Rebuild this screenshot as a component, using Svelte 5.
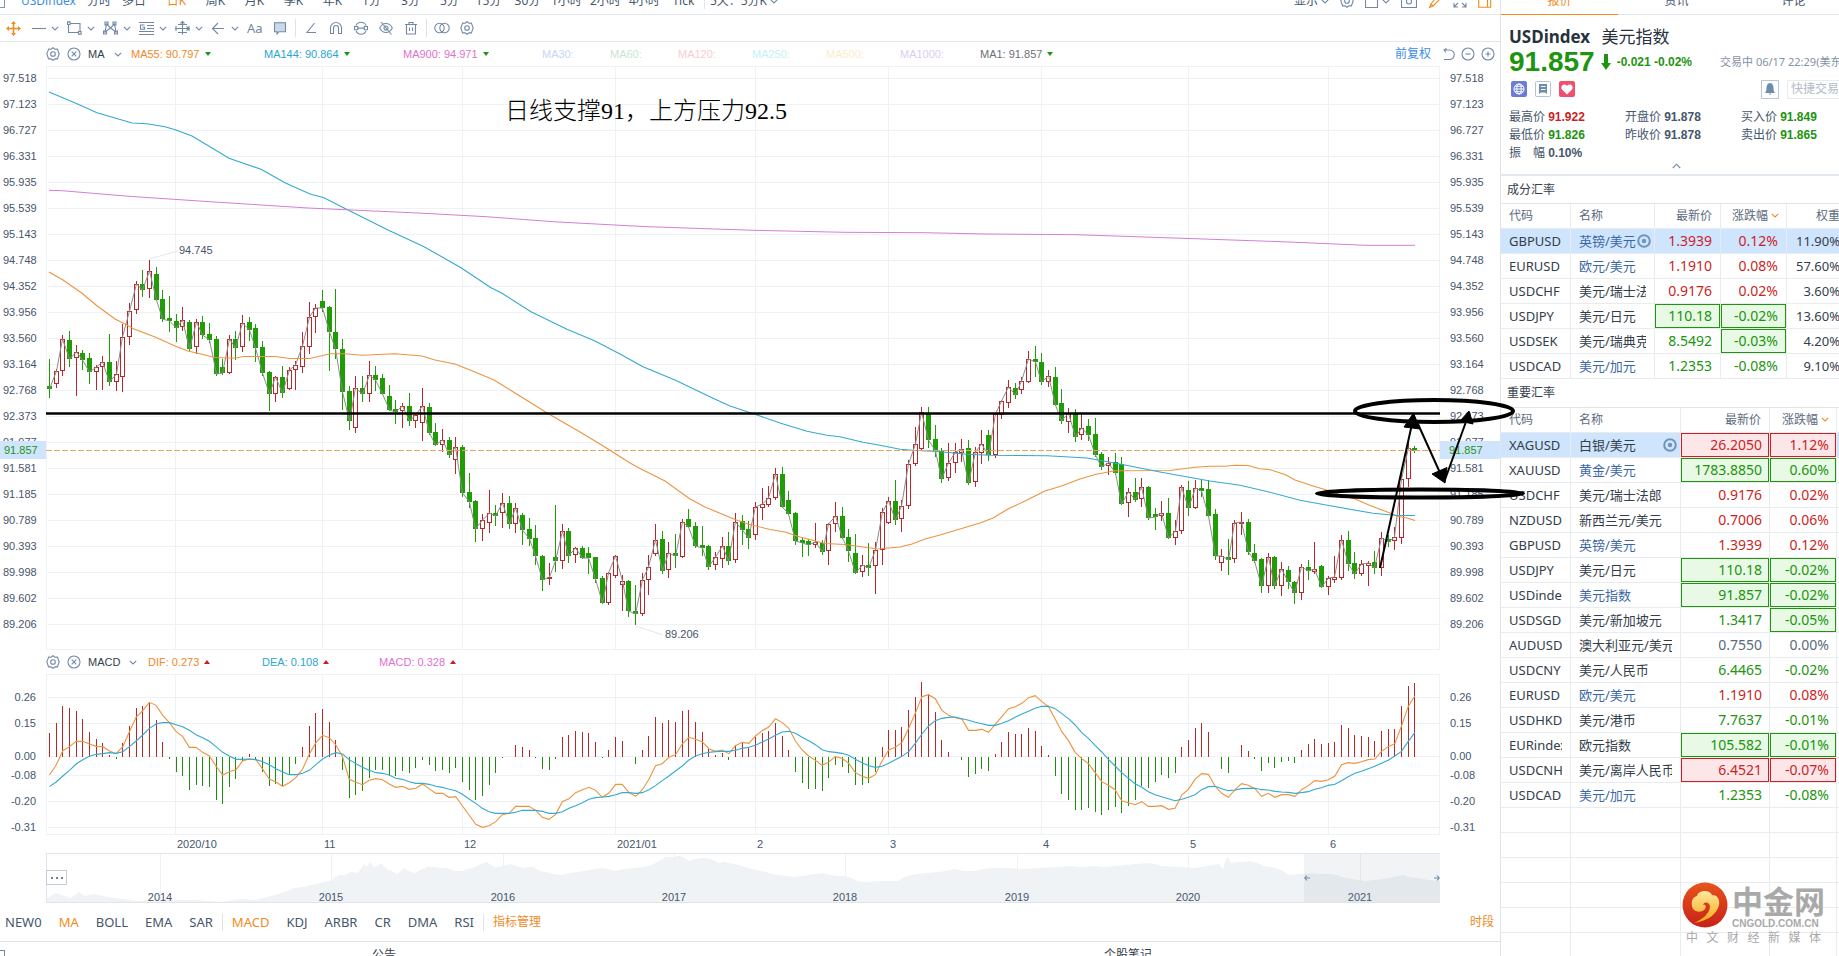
<script lang="ts">
  // direction, high, body top, body bottom, low (see priceY for the scale)
  const candleData = `
d 357 438 446 473|u 388 394 431 443|u 285 298 394 407|d 273 300 356 380|u 315 337 353 467|d 331 339 360 389|d 339 353 396 432|u 375 382 395 449
u 349 366 382 449|d 282 366 425 437|u 364 403 425 452|u 252 292 412 455|u 189 213 292 314|u 123 133 211 223|d 90 132 150 170|u 60 94 146 174
d 81 102 180 182|d 150 177 236 246|d 168 233 242 276|d 222 243 263 305|u 201 241 260 273|d 241 246 328 332|u 238 247 322 341|d 228 246 284 296
d 249 282 299 308|d 288 297 401 407|d 357 381 399 404|u 286 298 398 401|d 273 297 323 359|u 225 250 322 335|d 231 246 269 302|d 252 264 323 365
d 303 321 398 407|d 394 396 461 513|u 408 412 461 486|d 378 411 458 473|u 381 391 446 449|u 363 376 391 449|u 276 319 380 398|u 186 232 322 341
u 192 205 230 278|d 150 183 203 215|d 198 202 276 392|d 147 276 326 356|d 297 327 455 510|d 438 453 542 570|u 408 445 563 578|d 408 444 461 486
u 363 406 461 486|d 378 405 419 452|d 402 414 461 464|d 435 468 509 512|d 480 507 516 551|u 490 499 512 563|d 459 498 542 557|u 520 524 542 563
u 444 499 548 602|d 489 501 578 584|d 549 576 614 617|u 567 601 614 635|d 591 600 644 653|u 591 622 661 701|d 615 621 758 770|d 699 756 785 803
d 780 783 866 905|u 823 841 866 902|u 750 820 848 878|d 796 820 827 857|u 759 790 820 863|d 768 789 851 866|u 790 805 853 878|d 820 825 869 914
d 834 867 896 917|d 855 894 947 974|d 945 948 1019 1052|u 969 1012 1018 1034|d 795 951 962 995|u 852 874 962 987|d 864 873 947 968|u 922 925 946 968
d 919 924 953 956|d 921 939 953 1001|d 951 951 1016 1028|d 1008 1014 1088 1092|u 996 1000 1088 1094|u 945 947 1009 1013|u 1006 1024 1036 1112|d 1020 1023 1112 1130
d 1035 1113 1121 1154|u 999 1021 1123 1127|u 945 982 1021 1064|u 852 901 943 947|d 873 897 992 1001|u 906 940 991 1013|d 882 939 947 983|u 837 847 950 953
d 807 837 860 865|d 846 858 917 923|d 858 915 923 947|d 915 918 980 989|u 936 952 976 989|u 891 919 956 983|d 876 918 962 974|u 820 847 961 968
d 825 843 869 916|d 843 867 893 926|u 786 802 886 899|u 744 793 805 839|u 738 775 794 802|u 684 703 775 781|d 681 702 800 803|d 753 780 821 824
d 816 819 902 914|d 891 900 908 950|d 897 903 914 947|u 849 907 914 923|d 900 909 935 944|u 850 853 934 974|u 786 829 853 875|d 801 828 893 896
d 867 891 932 965|d 882 939 998 1001|u 945 976 997 1010|d 910 975 983 1007|u 906 931 979 1061|u 805 817 931 974|u 772 784 850 853|d 720 783 839 854
u 780 799 838 875|u 660 673 799 806|u 561 613 673 677|u 501 517 626 629|d 501 518 599 623|d 555 597 632 650|d 624 632 716 728|u 609 670 715 722
u 608 637 668 698|u 597 628 638 665|d 600 624 728 734|u 622 637 725 740|u 570 613 638 671|d 570 585 644 662|u 518 522 644 653|u 481 484 524 536
u 420 442 488 503|d 430 444 464 476|u 410 424 449 461|u 333 358 425 430|d 318 357 365 410|d 339 366 425 434|u 390 409 425 440|d 381 411 494 497
d 447 489 542 551|u 504 520 545 578|d 507 520 590 605|u 523 565 586 599|d 537 558 584 602|d 534 582 644 650|d 636 642 680 689|u 651 670 677 704
d 639 666 698 704|d 651 672 791 794|u 745 757 790 830|d 714 756 779 785|u 714 742 778 800|d 738 741 833 839|d 804 822 830 869|u 783 820 827 842
d 774 819 893 896|u 840 874 893 914|u 736 742 874 881|d 723 750 803 827|u 720 745 803 806|d 717 744 752 770|d 720 747 827 830|d 807 822 947 959
u 927 949 968 992|d 897 951 959 1004|u 840 850 956 968|u 816 847 853 884|d 838 846 935 944|d 912 939 962 968|d 955 957 1037 1058|u 939 952 1037 1058
d 948 951 1037 1046|u 966 988 1037 1067|d 978 990 1025 1046|d 1023 1025 1058 1091|u 973 982 1058 1079|d 960 981 994 1019|u 906 988 995 1001|d 975 978 1040 1043
u 1008 1015 1040 1064|u 949 1012 1019 1028|u 885 901 1013 1019|d 873 900 971 992|d 936 969 1001 1016|u 960 973 1001 1007|u 964 970 977 1037|d 933 966 983 1001
u 877 895 985 1007|d 885 897 905 920|u 861 892 902 929|u 700 718 893 911|u 610 625 718 740|d 618 624 632 638`;

  const slotX = (i: number) => 49 + i * 6.66;
  const priceY = (v: number) => Math.round(240 + v / 3);
  const macdY = (v: number) => 640 + v / 3;

  const candles = candleData.trim().split(/[|\n]/).map((row, i) => {
    const [dir, ...v] = row.split(' ');
    const [high, top, bottom, low] = v.map((n) => priceY(Number(n)));
    return { up: dir === 'u', x: Math.round(slotX(i)), high, top, bottom, low };
  });

  const closeLine = candles.map((c) => `${c.x + 0.5},${c.up ? c.top : c.bottom}`).join(' ');

  const ma55 = '49,272 63,280 82,293.3 96,305 115,319 125,324 134,329 155,337 165,341.5 175,346 188,351 205,355 215,357.5 225,358 236,358 243,356.5 275,356.5 290,358.5 310,358.5 330,353.7 345,353.7 362,355.3 395,353.7 422,356 435,360 455,364 475,372 494,380 515,393 548,413.5 580,432 600,444 630,463 640,468.5 665,481 690,499 705,507 735,519.5 748,524 770,529.5 785,532 800,537 825,543.5 845,544.5 878,549 900,547 912,544 925,539 940,535 960,529 980,523 993,518 1008,509 1025,501 1045,491 1060,486.5 1080,479 1095,474.5 1115,470.7 1170,470.5 1195,467.3 1210,466.3 1225,466.3 1235,465.3 1248,465.5 1260,468.7 1270,469.7 1285,474.5 1295,480 1310,485 1328,490.5 1340,494.5 1355,499 1370,505.5 1390,513 1398,516.5 1407,518 1415,520.5';
  const ma144 = '49,92 73,102 97,112.7 115,118 132,123 147,123.7 165,126.7 176,130 192,136 210,146.7 229,158.3 261,169.3 285,182.7 310,194 324,197.7 346,209 388,230 424,246.7 461,267.7 491,287.7 502,293.3 531,311.7 567,329.3 595,341 620,354 643,366.7 675,380 713,398.3 730,406 757,415 780,423 807,431.3 827,435.3 840,436.7 863,442.3 880,445.3 900,449.3 913,450.3 937,451.5 967,454.3 990,455.3 1047,455.7 1087,458 1120,464 1160,472 1210,481 1240,485.3 1268,491.7 1300,500.3 1333,506.3 1373,513.3 1397,515.5 1415,515.5';
  const ma900 = '49,190.3 62,190.7 129,196.3 219,202.3 308,208 424,213.3 486,216.7 558,222 647,226.7 754,230.3 844,232.3 924,232.7 986,234 1076,234.7 1183,238.3 1281,241.7 1366,245.3 1415,245.3';

  // histogram bar ends, 349 is the zero line
  const MACD_ZERO = 349;
  const bars = [
    280, 249, 198, 204, 213, 237, 276, 298, 309, 346, 356, 310, 258, 205, 199, 189, 241, 307, 356, 396, 408, 449, 434, 438, 440,
    480, 491, 440, 416, 362, 343, 357, 396, 438, 432, 438, 402, 372, 321, 259, 220, 208, 246, 300, 389, 473, 464, 453, 413, 389,
    389, 407, 407, 393, 399, 384, 360, 375, 392, 390, 399, 384, 425, 449, 480, 467, 434, 398, 353, 349, 315, 321, 331, 353, 387,
    389, 356, 291, 286, 273, 276, 279, 307, 353, 331, 291, 304, 349, 372, 331, 289, 232, 249, 240, 247, 213, 210, 247, 277, 327,
    345, 340, 360, 316, 310, 321, 291, 279, 273, 250, 289, 330, 395, 429, 446, 446, 452, 413, 375, 381, 398, 434, 434, 428, 395,
    322, 270, 270, 262, 211, 171, 127, 163, 217, 300, 337, 349, 360, 410, 401, 387, 392, 343, 307, 277, 282, 282, 265, 274, 319,
    346, 407, 461, 480, 510, 510, 503, 515, 524, 510, 500, 518, 498, 479, 438, 443, 425, 405, 413, 399, 322, 301, 265, 250, 277,
    349, 387, 398, 349, 315, 334, 357, 392, 369, 384, 366, 363, 369, 331, 312, 297, 312, 310, 307, 256, 265, 286, 288, 291, 304,
    273, 267, 267, 199, 138, 130
  ];
  const dif = [
    405, 375, 332, 320, 304, 304, 312, 319, 320, 333, 341, 320, 275, 232, 212, 187, 196, 226, 248, 274, 290, 322, 322, 337, 348,
    378, 405, 395, 389, 363, 357, 359, 387, 417, 426, 439, 428, 413, 388, 343, 308, 286, 293, 315, 350, 418, 427, 434, 421, 416,
    419, 432, 442, 439, 448, 445, 432, 446, 460, 460, 472, 470, 498, 525, 553, 562, 557, 545, 524, 520, 499, 499, 499, 511, 532,
    538, 523, 485, 476, 458, 449, 442, 451, 472, 459, 433, 433, 458, 469, 450, 418, 377, 371, 352, 344, 312, 292, 298, 305, 326,
    334, 330, 341, 317, 307, 310, 288, 272, 261, 236, 247, 265, 303, 330, 348, 361, 376, 366, 350, 355, 370, 398, 409, 415, 404,
    363, 330, 322, 307, 265, 220, 170, 164, 176, 211, 226, 233, 238, 271, 271, 268, 277, 253, 230, 206, 200, 190, 173, 167, 185,
    200, 237, 275, 302, 337, 356, 371, 398, 425, 436, 449, 482, 488, 494, 485, 499, 499, 497, 508, 505, 465, 448, 418, 401, 403,
    438, 460, 472, 449, 431, 436, 446, 469, 460, 472, 464, 464, 469, 449, 437, 422, 424, 419, 408, 374, 368, 370, 365, 359, 357,
    334, 320, 311, 258, 200, 168
  ];
  const dea = [
    440, 426, 408, 391, 372, 359, 349, 343, 341, 338, 340, 335, 320, 303, 285, 265, 252, 248, 248, 254, 260, 271, 284, 293, 304,
    320, 337, 348, 358, 358, 357, 359, 365, 374, 386, 396, 404, 404, 400, 391, 374, 357, 346, 338, 342, 359, 371, 382, 391, 398,
    400, 405, 415, 418, 425, 430, 430, 433, 439, 442, 448, 452, 463, 477, 490, 505, 515, 520, 520, 520, 517, 511, 511, 511, 514,
    520, 520, 515, 505, 497, 488, 478, 473, 471, 469, 464, 458, 458, 460, 458, 449, 437, 422, 408, 393, 378, 360, 348, 341, 337,
    335, 334, 334, 331, 325, 322, 316, 306, 297, 286, 276, 274, 280, 292, 302, 314, 329, 335, 337, 340, 346, 358, 368, 377, 382,
    379, 370, 359, 349, 335, 310, 282, 258, 242, 235, 232, 231, 236, 241, 247, 251, 256, 256, 250, 242, 232, 222, 214, 205, 199,
    199, 206, 221, 236, 255, 278, 295, 316, 336, 358, 378, 398, 415, 431, 442, 455, 464, 470, 476, 482, 478, 472, 464, 449, 440,
    439, 446, 452, 450, 446, 445, 445, 449, 450, 454, 456, 457, 460, 458, 455, 448, 443, 436, 433, 422, 410, 400, 394, 386, 379,
    370, 361, 348, 334, 305, 278
  ];
  const toLine = (values: number[]) => values.map((v, i) => `${slotX(i) + 0.5},${macdY(v)}`).join(' ');

  const history = '46,902 46,899 55,893 62,895 71,898 79,892 85,896 94,894 108,897 122,899 138,901 158,899 179,900 197,900 220,902 239,899 255,900 275,895 287,891 295,888 303,887 310,885 317,884 324,882 331,881 335,877 340,875 344,875 351,872 358,873 364,864 367,867 370,862 374,867 378,866 381,863 388,870 392,871 397,874 401,871 404,868 409,871 415,873 420,870 427,867 434,867 441,868 447,868 455,871 462,871 468,869 475,867 481,864 487,862 491,865 496,867 503,866 510,864 516,866 523,868 528,867 533,867 540,871 546,872 553,874 562,875 570,873 578,872 590,870 601,868 608,869 615,871 624,869 634,868 643,867 652,865 659,861 666,857 673,857 680,856 685,858 689,861 695,859 702,858 707,858 713,860 719,863 725,862 738,865 745,867 752,869 760,871 766,872 772,874 778,875 786,876 794,877 803,876 813,874 818,874 823,873 830,875 837,876 844,876 851,878 858,881 863,882 880,881 898,881 902,878 908,876 917,874 926,873 940,872 955,869 964,871 974,871 983,869 993,868 1007,868 1021,869 1040,868 1059,867 1070,866 1082,867 1094,866 1106,867 1115,866 1125,865 1137,864 1148,863 1155,864 1162,866 1180,867 1195,868 1207,866 1219,864 1221,867 1223,869 1225,862 1227,857 1229,860 1231,863 1237,862 1243,862 1250,861 1257,863 1264,866 1271,867 1278,869 1283,871 1287,874 1290,875 1300,874 1309,873 1318,874 1332,874 1342,877 1351,879 1358,880 1365,881 1375,880 1384,879 1394,877 1403,875 1410,877 1417,878 1428,880 1440,881 1440,902';

  const priceTicks = ['97.518', '97.123', '96.727', '96.331', '95.935', '95.539', '95.143', '94.748', '94.352', '93.956', '93.560', '93.164', '92.768', '92.373', '91.977', '91.581', '91.185', '90.789', '90.393', '89.998', '89.602', '89.206'];
  const tickY = (i: number) => 78 + i * 26;
  const macdTicks = [
    { label: '0.26', y: 697 },
    { label: '0.15', y: 723 },
    { label: '0.00', y: 756 },
    { label: '-0.08', y: 775 },
    { label: '-0.20', y: 801 },
    { label: '-0.31', y: 827 }
  ];
  const months = [
    { label: '2020/10', x: 175 },
    { label: '11', x: 322 },
    { label: '12', x: 462 },
    { label: '2021/01', x: 615 },
    { label: '2', x: 755 },
    { label: '3', x: 888 },
    { label: '4', x: 1041 },
    { label: '5', x: 1188 },
    { label: '6', x: 1328 }
  ];
  const years = [
    { label: '2014', x: 160 },
    { label: '2015', x: 331 },
    { label: '2016', x: 503 },
    { label: '2017', x: 674 },
    { label: '2018', x: 845 },
    { label: '2019', x: 1017 },
    { label: '2020', x: 1188 },
    { label: '2021', x: 1360 }
  ];
  const pctX = (x: number) => ((x - 46) / 1394) * 100;
  const pctPrice = (y: number) => ((y - 66) / 584) * 100;
  const pctMacd = (y: number) => ((y - 674) / 161) * 100;

  const periods = ['日K', '周K', '月K', '季K', '年K', '1分', '3分', '5分', '15分', '30分', '1小时', '2小时', '4小时', 'Tick'];
  const maLegend = [
    { text: 'MA55: 90.797', color: '#f0882a', w: 133, down: true },
    { text: 'MA144: 90.864', color: '#2aa6cf', w: 139, down: true },
    { text: 'MA900: 94.971', color: '#e070d0', w: 139, down: true },
    { text: 'MA30:', color: '#c4d7f4', w: 68 },
    { text: 'MA60:', color: '#c6e6d4', w: 68 },
    { text: 'MA120:', color: '#f8cdd0', w: 74 },
    { text: 'MA250:', color: '#c2f3f3', w: 74 },
    { text: 'MA500:', color: '#faeccb', w: 74 },
    { text: 'MA1000:', color: '#dccdf2', w: 80 },
    { text: 'MA1: 91.857', color: '#6b7178', w: 80, down: true }
  ];
  const macdLegend = [
    { text: 'DIF: 0.273', color: '#f0882a', w: 114 },
    { text: 'DEA: 0.108', color: '#2aa6cf', w: 117 },
    { text: 'MACD: 0.328', color: '#e070d0', w: 90 }
  ];

  const stats = [
    ['最高价', '91.922', 'up'], ['开盘价', '91.878', ''], ['买入价', '91.849', 'down'],
    ['最低价', '91.826', 'down'], ['昨收价', '91.878', ''], ['卖出价', '91.865', 'down'],
    ['振　幅', '0.10%', '']
  ];

  const components = [
    { code: 'GBPUSD', name: '英镑/美元', price: '1.3939', change: '0.12%', weight: '11.90%', tone: 'up', link: true, active: true },
    { code: 'EURUSD', name: '欧元/美元', price: '1.1910', change: '0.08%', weight: '57.60%', tone: 'up', link: true },
    { code: 'USDCHF', name: '美元/瑞士法郎', price: '0.9176', change: '0.02%', weight: '3.60%', tone: 'up' },
    { code: 'USDJPY', name: '美元/日元', price: '110.18', change: '-0.02%', weight: '13.60%', tone: 'down', box: 'both' },
    { code: 'USDSEK', name: '美元/瑞典克朗', price: '8.5492', change: '-0.03%', weight: '4.20%', tone: 'down', box: 'change' },
    { code: 'USDCAD', name: '美元/加元', price: '1.2353', change: '-0.08%', weight: '9.10%', tone: 'down', link: true }
  ];
  const majors = [
    { code: 'XAGUSD', name: '白银/美元', price: '26.2050', change: '1.12%', tone: 'up', box: 'both', active: true },
    { code: 'XAUUSD', name: '黄金/美元', price: '1783.8850', change: '0.60%', tone: 'down', box: 'both', link: true },
    { code: 'USDCHF', name: '美元/瑞士法郎', price: '0.9176', change: '0.02%', tone: 'up' },
    { code: 'NZDUSD', name: '新西兰元/美元', price: '0.7006', change: '0.06%', tone: 'up' },
    { code: 'GBPUSD', name: '英镑/美元', price: '1.3939', change: '0.12%', tone: 'up', link: true },
    { code: 'USDJPY', name: '美元/日元', price: '110.18', change: '-0.02%', tone: 'down', box: 'both' },
    { code: 'USDindex', name: '美元指数', price: '91.857', change: '-0.02%', tone: 'down', box: 'both', link: true },
    { code: 'USDSGD', name: '美元/新加坡元', price: '1.3417', change: '-0.05%', tone: 'down', box: 'change' },
    { code: 'AUDUSD', name: '澳大利亚元/美元', price: '0.7550', change: '0.00%', tone: 'flat' },
    { code: 'USDCNY', name: '美元/人民币', price: '6.4465', change: '-0.02%', tone: 'down' },
    { code: 'EURUSD', name: '欧元/美元', price: '1.1910', change: '0.08%', tone: 'up', link: true },
    { code: 'USDHKD', name: '美元/港币', price: '7.7637', change: '-0.01%', tone: 'down' },
    { code: 'EURindex', name: '欧元指数', price: '105.582', change: '-0.01%', tone: 'down', box: 'both' },
    { code: 'USDCNH', name: '美元/离岸人民币', price: '6.4521', change: '-0.07%', tone: 'up', box: 'both' },
    { code: 'USDCAD', name: '美元/加元', price: '1.2353', change: '-0.08%', tone: 'down', link: true }
  ];

  let period = '日K';
  let overlay = 'MA';
  let study = 'MACD';
</script>

{#snippet chevron()}
  <svg class="chev" width="8" height="5" viewBox="0 0 8 5"><path d="M.8 .8 4 4 7.2 .8" /></svg>
{/snippet}

{#snippet gear()}
  <svg class="ic" width="14" height="14" viewBox="0 0 14 14">
    <path d="M7 .7 9 2.2l2.4-.1.8 2.3L13.2 7l-1 2.6-.8 2.3L9 11.8 7 13.3 5 11.8l-2.4.1-.8-2.3L.8 7l1-2.6.8-2.3L5 2.2z" />
    <circle cx="7" cy="7" r="2.3" />
  </svg>
{/snippet}

{#snippet closeIcon()}
  <svg class="ic" width="14" height="14" viewBox="0 0 14 14"><circle cx="7" cy="7" r="6" /><path d="M4.7 4.7l4.6 4.6M9.3 4.7 4.7 9.3" /></svg>
{/snippet}

{#snippet watch()}
  <svg class="watch" width="14" height="14" viewBox="0 0 14 14"><circle cx="7" cy="7" r="5.8" /><circle class="dot" cx="7" cy="7" r="2.2" /></svg>
{/snippet}

<div class="app">
  <main>
    <header class="top">
      <div class="top-row">
        <label class="pick"><input type="checkbox" aria-label="USDindex" /></label>
        <a class="symbol" href="#usdindex">USDindex</a>
        <button class="mode">分时</button>
        <button class="mode">多日</button>
        {#each periods as p}
          <button class="period" class:on={p === period} on:click={() => (period = p)}>{p}</button>
        {/each}
        <button class="custom">5天：5分K {@render chevron()}</button>
        <div class="top-tools">
          <button>显示 {@render chevron()}</button>
          <button aria-label="设置">{@render gear()}</button>
          <button aria-label="布局"><svg class="ic" width="14" height="14" viewBox="0 0 14 14"><path d="M.5 .5h12v13H.5z" /></svg>{@render chevron()}</button>
          <button aria-label="截图"><svg class="ic" width="16" height="14" viewBox="0 0 16 14"><path d="M.5 2.5h4l1-2h5l1 2h4v11H.5z" /><circle cx="8" cy="7.5" r="2.5" /></svg></button>
          <button aria-label="画笔"><svg class="ic hot" width="14" height="15" viewBox="0 0 14 15"><path d="M10 1l3 3-8 8-3.5 1.5L3 10z M3 10l2 2" /></svg></button>
          <button aria-label="全屏"><svg class="ic" width="14" height="14" viewBox="0 0 14 14"><path d="M1 5V1h4M9 1h4v4M13 9v4H9M5 13H1V9M1 13l4-4M13 13 9 9M1 1l4 4M13 1 9 5" /></svg></button>
          <button aria-label="侧栏"><svg class="ic hot" width="14" height="14" viewBox="0 0 14 14"><path d="M.7 .7h12v12.6H.7zM9.5 1v12" /></svg></button>
        </div>
      </div>
    </header>

    <div class="draw">
      <button aria-label="移动"><svg class="hotfill" width="15" height="15" viewBox="0 0 15 15"><path d="M7.5 0 10 3H8.3v3.7H12V5l3 2.5L12 10V8.3H8.3V12H10l-2.5 3L5 12h1.700V8.3H3V10L0 7.5 3 5v1.700h3.7V3H5z" /></svg></button>
      <button class="first" aria-label="直线"><svg class="ic" width="14" height="14" viewBox="0 0 14 14"><path d="M0 7.500h14" /></svg>{@render chevron()}</button>
      <button aria-label="矩形"><svg class="ic" width="15" height="14" viewBox="0 0 15 14"><path d="M1.500 3.500v8h10M13 10V2.500H3.500M.5 .9h2.600v2.600H.5zM11.500 10.500h2.600v2.600h-2.600z" /></svg>{@render chevron()}</button>
      <button aria-label="形态"><svg class="ic" width="15" height="14" viewBox="0 0 15 14"><path d="M2 11 3.500 3l4 4 4-4L13 11 7.500 7z M2 11l5.500-4M2 1h3v3H2zM10 1h3v3h-3zM.5 10h3v3h-3zM11.500 10h3v3h-3z" /></svg>{@render chevron()}</button>
      <button aria-label="斐波那契"><svg class="ic" width="15" height="14" viewBox="0 0 15 14"><path d="M0 1.500h15M8 4.500h7M8 7.500h7M0 10.500h15M0 13.500h15M5.500 4H1.500v4.300h4V6.300H3.500" /></svg>{@render chevron()}</button>
      <button aria-label="测量"><svg class="ic" width="15" height="14" viewBox="0 0 15 14"><path d="M0 7.500h15M7.500 .5v13M1 5v5M14 5v5M3 3.500h9M3 11.500h9M11.500 5.500l2 2-2 2M5.500 2.500l2-2 2 2" /></svg>{@render chevron()}</button>
      <button aria-label="箭头"><svg class="ic" width="15" height="14" viewBox="0 0 15 14"><path d="M13 7.500H1.500M7 2 1.500 7.500 7 13" /></svg>{@render chevron()}</button>
      <button class="aa">Aa</button>
      <button class="note" aria-label="注释"><svg class="ic" width="14" height="13" viewBox="0 0 14 13"><path class="tint" d="M1.500 .7h11v9H6l-2 2.200V9.700H1.500z" /></svg></button>
      <i class="sep"></i>
      <button class="tool" aria-label="角度"><svg class="ic" width="14" height="14" viewBox="0 0 14 14"><path d="M10.500 2 3 11.500h9" /></svg></button>
      <button class="tool" aria-label="磁铁"><svg class="ic" width="14" height="14" viewBox="0 0 14 14"><path d="M1.500 12.500V7a5.500 5.500 0 0 1 11 0v5.500H9.500V7a2.500 2.500 0 0 0-5 0v5.500z" /></svg></button>
      <button class="tool" aria-label="锁定"><svg class="ic" width="14" height="14" viewBox="0 0 14 14"><path d="M2 4.500a5.500 5.500 0 0 1 10 0M2 10a5.500 5.500 0 0 0 10 0M.5 5.500h3.200v3.200H.5zM10.300 5.500h3.200v3.200h-3.200zM4 7.100h6" /></svg></button>
      <button class="tool" aria-label="隐藏"><svg class="ic" width="14" height="14" viewBox="0 0 14 14"><path d="M.7 7S3 2.500 7 2.500 13.300 7 13.300 7 11 11.500 7 11.500.7 7 .7 7zM2 1l10.500 12.500" /><circle cx="7" cy="7" r="2" /></svg></button>
      <button class="tool" aria-label="删除"><svg class="ic" width="14" height="14" viewBox="0 0 14 14"><path d="M1 3.500h12M5 3.500V1.500h4v2M2.500 3.500v9.500h9V3.500M5.500 6.500V10M8.500 6.500V10" /></svg></button>
      <i class="sep"></i>
      <button class="tool" aria-label="对比"><svg class="ic" width="16" height="12" viewBox="0 0 16 12"><circle cx="5.5" cy="6" r="4.7" /><circle cx="10.5" cy="6" r="4.7" /></svg></button>
      <button class="tool" aria-label="绘图设置">{@render gear()}</button>
    </div>

    <div class="legend">
      {@render gear()}{@render closeIcon()}
      <button class="ind ma">MA {@render chevron()}</button>
      {#each maLegend as item}
        <span class="val" style="color: {item.color}; width: {item.w}px">{item.text}{#if item.down}<i class="tri-down"></i>{/if}</span>
      {/each}
      <div class="legend-end">
        <button class="adj">前复权</button>
        <svg class="ic" width="12" height="13" viewBox="0 0 12 13"><path d="M1 2h5.500a4.700 4.700 0 0 1 0 9.500H1M3.500 .5 1 2l2 2.500" /></svg>
        <svg class="ic" width="14" height="14" viewBox="0 0 14 14"><circle cx="7" cy="7" r="6" /><path d="M4.500 7h5" /></svg>
        <svg class="ic" width="14" height="14" viewBox="0 0 14 14"><circle cx="7" cy="7" r="6" /><path d="M4.500 7h5M7 4.500v5" /></svg>
      </div>
    </div>

    <section class="pane price">
      <div class="axis">
        {#each priceTicks as t, i}<span style="top: {pctPrice(tickY(i))}%">{t}</span>{/each}
        <b style="top: {pctPrice(450)}%">91.857</b>
      </div>
      <div class="plot">
        <svg class="fill" viewBox="46 66 1394 584" preserveAspectRatio="none">
          <g class="grid">
            <path d="M46 66.500H1440M46 649.500H1440M46.500 66V650M1439.500 66V650" />
            {#each priceTicks as _, i}<path d="M48 {tickY(i) + 0.5}H1440" />{/each}
            {#each months as m}<path d="M{m.x + 0.5} 66V650" />{/each}
          </g>
          <path class="leader" d="M149 259 178 251M636 626 663 635" />
          <g class="candles">
            {#each candles as c}
              <g class={c.up ? 'rise' : 'fall'}>
                <path d="M{c.x + 0.5} {c.high}V{c.low}" />
                <rect x={c.x - 1.5} y={c.top + 0.5} width="4" height={Math.max(1, c.bottom - c.top - 1)} />
              </g>
            {/each}
          </g>
          <polyline class="ma1" points={closeLine} />
          <polyline class="c-dif" points={ma55} />
          <polyline class="c-dea" points={ma144} />
          <polyline class="c-900" points={ma900} />
          <path class="last" d="M46 450.500H1440" />
          <path class="level" d="M46 413.500H1440" />
        </svg>
        <span class="mark" style="left: {pctX(179)}%; top: {pctPrice(250)}%">94.745</span>
        <span class="mark" style="left: {pctX(665)}%; top: {pctPrice(634)}%">89.206</span>
        <p class="remark" style="left: {pctX(505)}%; top: {pctPrice(111)}%">日线支撑91，上方压力92.5</p>
        <svg class="sketch" width="226" height="220" viewBox="1304 390 226 220">
          <ellipse cx="1434" cy="411" rx="79" ry="11" />
          <ellipse cx="1420" cy="493.5" rx="103" ry="4" />
          <path d="M1380 568 1412 424M1418 424 1441 475M1444.500 481 1467 419" />
          <path class="head" d="M1413.500 413 1404 427 1420 429zM1445 483 1432 474 1447 467.500zM1469 411 1460 421 1473 424z" />
        </svg>
      </div>
      <div class="axis right">
        {#each priceTicks as t, i}<span style="top: {pctPrice(tickY(i))}%">{t}</span>{/each}
        <b style="top: {pctPrice(450)}%">91.857</b>
      </div>
    </section>

    <div class="legend">
      {@render gear()}{@render closeIcon()}
      <button class="ind macd">MACD {@render chevron()}</button>
      {#each macdLegend as item}
        <span class="val" style="color: {item.color}; width: {item.w}px">{item.text}<i class="tri-up"></i></span>
      {/each}
    </div>

    <section class="pane macd-pane">
      <div class="axis inner">
        {#each macdTicks as t}<span style="top: {pctMacd(t.y)}%">{t.label}</span>{/each}
      </div>
      <div class="plot">
        <svg class="fill" viewBox="46 674 1394 161" preserveAspectRatio="none">
          <g class="grid">
            <path d="M46 674.500H1440M46 834.500H1440M46.500 674V835M1439.500 674V835" />
            {#each macdTicks as t}<path d="M48 {t.y + 0.5}H1440" />{/each}
            {#each months as m}<path d="M{m.x + 0.5} 674V835" />{/each}
          </g>
          {#each bars as v, i}
            {#if v !== MACD_ZERO}
              <path class={v < MACD_ZERO ? 'bar-up' : 'bar-down'} d="M{Math.round(slotX(i)) + 0.5} 756.500V{macdY(v)}" />
            {/if}
          {/each}
          <polyline class="c-dif" points={toLine(dif)} />
          <polyline class="c-dea" points={toLine(dea)} />
        </svg>
      </div>
      <div class="axis right">
        {#each macdTicks as t}<span style="top: {pctMacd(t.y)}%">{t.label}</span>{/each}
      </div>
    </section>

    <div class="times">
      {#each months as m}<span style="left: {pctX(m.x + 2)}%">{m.label}</span>{/each}
    </div>

    <div class="nav">
      <svg class="fill" viewBox="46 853 1394 50" preserveAspectRatio="none">
        <polygon points={history} />
        <g class="grid">{#each years as y}<path d="M{y.x + 0.5} 853V903" />{/each}</g>
        <path class="edge" d="M46 853.500H1440M46 902.500H1440M46.500 853V903" />
      </svg>
      {#each years as y}<span style="left: {pctX(y.x)}%">{y.label}</span>{/each}
      <div class="range">
        <svg width="6" height="8" viewBox="0 0 6 8"><path d="M6 4H.8M3 1.500.8 4 3 6.500" /></svg>
        <svg width="6" height="8" viewBox="0 0 6 8"><path d="M0 4h5.200M3 1.500 5.200 4 3 6.500" /></svg>
      </div>
      <button class="more" aria-label="更多"><i></i><i></i><i></i></button>
    </div>

    <div class="studies">
      {#each ['NEW0', 'MA', 'BOLL', 'EMA', 'SAR'] as s}
        <button class:on={s === overlay} on:click={() => (overlay = s)}>{s}</button>
      {/each}
      <i class="sep"></i>
      {#each ['MACD', 'KDJ', 'ARBR', 'CR', 'DMA', 'RSI'] as s}
        <button class:on={s === study} on:click={() => (study = s)}>{s}</button>
      {/each}
      <i class="sep"></i>
      <button class="on cn">指标管理</button>
      <button class="on cn session">时段</button>
    </div>

    <footer>
      <i class="fold"></i>
      <button>公告</button>
      <button>个股笔记</button>
    </footer>
  </main>

  <aside>
    <div class="side">
      <nav class="side-tabs">
        <button class="on">报价</button>
        <button>资讯</button>
        <button>评论</button>
      </nav>

      <section class="quote">
        <h1>USDindex <span>美元指数</span></h1>
        <div class="last-price">
          <strong>91.857</strong>
          <svg width="10" height="16" viewBox="0 0 10 16"><path d="M3 0h4v9h3l-5 7-5-7h3z" /></svg>
          <em>-0.021 -0.02%</em>
          <small>交易中 06/17 22:29(美东)</small>
        </div>
        <div class="badges">
          <svg width="16" height="16" viewBox="0 0 16 16"><rect width="16" height="16" rx="2" fill="#6b7bd6" /><g fill="none" stroke="#fff"><circle cx="8" cy="8" r="5" /><ellipse cx="8" cy="8" rx="2.2" ry="5" /><path d="M3 8h10M4 5.200h8M4 10.800h8" /></g></svg>
          <svg width="16" height="16" viewBox="0 0 16 16"><rect x=".5" y=".5" width="15" height="15" rx="1" fill="#fff" stroke="#b4c3d4" /><path d="M4 3h8v10l-2-1.500H6L4 13z" fill="#6f8cad" /><path d="M6 5.500h4.500M6 8.500h4.500" stroke="#fff" /></svg>
          <svg width="16" height="16" viewBox="0 0 16 16"><rect width="16" height="16" rx="2" fill="#f0506e" /><path d="M8 13.500 3 8.500C.8 5.500 4.500 1.500 8 4.800c3.500-3.300 7.200.7 5 3.700z" fill="#fff" /></svg>
          <button class="bell" aria-label="提醒"><svg width="10" height="12" viewBox="0 0 10 12"><path d="M5 0c2.800.5 3.500 2.300 3.500 5S9 8.500 10 10H0c1-1.500 1.500-2.300 1.500-5S2.200.5 5 0zM3.700 10.500h2.600L5 12z" fill="#6f8cad" /></svg></button>
          <button class="quick">快捷交易</button>
        </div>
        <div class="stats">
          {#each stats as [label, value, tone]}
            <div>{label} <b class={tone}>{value}</b></div>
          {/each}
        </div>
        <button class="collapse" aria-label="收起"><svg width="9" height="6" viewBox="0 0 9 6"><path d="M.8 5 4.500 1.200 8.200 5" /></svg></button>
      </section>

      <h2>成分汇率</h2>
      <table class="comp">
        <colgroup><col class="w70" /><col class="w84" /><col class="w66" /><col class="w66" /><col /></colgroup>
        <thead>
          <tr><th>代码</th><th>名称</th><th class="r">最新价</th><th class="r sort">涨跌幅 {@render chevron()}</th><th class="r last-col">权重</th></tr>
        </thead>
        <tbody>
          {#each components as row}
            <tr class:active={row.active}>
              <td><div class="clip">{row.code}</div></td>
              <td class="name" class:link={row.link}><div class="clip">{row.name}</div>{#if row.active}{@render watch()}{/if}</td>
              <td class="r num {row.tone}" class:box={row.box === 'both'}>{row.price}</td>
              <td class="r num {row.tone}" class:box={row.box}>{row.change}</td>
              <td class="r last-col">{row.weight}</td>
            </tr>
          {/each}
        </tbody>
      </table>

      <h2 class="second">重要汇率</h2>
      <table class="major">
        <colgroup><col class="w70" /><col class="w110" /><col class="w89" /><col class="w67" /><col /></colgroup>
        <thead>
          <tr><th>代码</th><th>名称</th><th class="r">最新价</th><th class="r sort">涨跌幅 {@render chevron()}</th><th></th></tr>
        </thead>
        <tbody>
          {#each majors as row}
            <tr class:active={row.active}>
              <td><div class="clip">{row.code}</div></td>
              <td class="name" class:link={row.link}><div class="clip">{row.name}</div>{#if row.active}{@render watch()}{/if}</td>
              <td class="r num {row.tone}" class:box={row.box === 'both'}>{row.price}</td>
              <td class="r num {row.tone}" class:box={row.box}>{row.change}</td>
              <td></td>
            </tr>
          {/each}
          {#each Array(6) as _}
            <tr><td></td><td></td><td></td><td></td><td></td></tr>
          {/each}
        </tbody>
      </table>
    </div>

    <div class="brand">
      <div class="brand-top">
        <svg width="46" height="46" viewBox="0 0 46 46">
          <defs>
            <linearGradient id="ball" x1="0" y1="0" x2="0" y2="1"><stop offset="0" stop-color="#e8541c" /><stop offset="1" stop-color="#c8201a" /></linearGradient>
            <linearGradient id="gold" x1="0" y1="0" x2="0" y2="1"><stop offset="0" stop-color="#ffe9a0" /><stop offset="1" stop-color="#f3a712" /></linearGradient>
          </defs>
          <circle cx="23" cy="23" r="22.5" fill="url(#ball)" />
          <path fill="url(#gold)" d="M15 14c1-6 13-7 15-1 6 0 8 5 7 10-2 9-11 16-25 18 9-4 15-9 16-16 0-5-6-6-7-2 2-1 4 1 2 4-3 4-12 4-13-3-1-5 1-9 5-10z" />
        </svg>
        <div class="brand-name"><b>中金网</b><span>CNGOLD.COM.CN</span></div>
      </div>
      <div class="slogan">{#each '中文财经新媒体' as ch}<span>{ch}</span>{/each}</div>
    </div>
  </aside>
</div>

<style>
  :global(body) {
    margin: 0;
    background: #fff;
  }

  .app {
    display: flex;
    height: 100vh;
    overflow: hidden;
    color: #46566b;
    font: 12px/16px "Noto Sans", "Noto Sans CJK SC", sans-serif;
  }

  button {
    padding: 0;
    border: 0;
    background: none;
    color: inherit;
    font: inherit;
    white-space: nowrap;
    cursor: pointer;
  }

  svg {
    display: block;
    flex: none;
  }

  main {
    flex: 1;
    min-width: 0;
    display: flex;
    flex-direction: column;
    border-right: 1px solid #dfe4e8;
  }

  .ic, .chev, .collapse path, .range path {
    fill: none;
    stroke: #7289a6;
    stroke-width: 1.1;
  }

  .hot { stroke: #f08c1e; }
  .hotfill { fill: #f08c1e; }
  .tint { fill: #c9d9ea; }

  /* top bar */
  .top {
    height: 14px;
    display: flex;
    align-items: flex-end;
    overflow: hidden;
    border-bottom: 1px solid #e2e6ea;
  }

  .top-row {
    flex: 1;
    display: flex;
    align-items: center;
    height: 26px;
  }

  .top-row button {
    display: flex;
    align-items: center;
    justify-content: center;
    gap: 3px;
  }

  .pick {
    width: 21px;
    overflow: hidden;
  }

  .pick input {
    display: block;
    appearance: none;
    width: 13px;
    height: 13px;
    margin: 0 0 0 -8px;
    border: 1px solid #8496ab;
  }

  .symbol {
    margin-right: 11px;
    color: #3b8de0;
    text-decoration: none;
  }

  .top-row .mode { width: 35px; justify-content: flex-start; }
  .top-row .period { width: 39px; }
  .top-row .period.on { color: #f08c1e; }
  .top-row .custom { margin-left: 1px; padding-left: 5px; border-left: 1px solid #e2e6ea; }

  .top-tools {
    margin-left: auto;
    margin-right: 8px;
    display: flex;
    align-items: center;
    gap: 11px;
  }

  /* drawing tools */
  .draw {
    height: 26px;
    display: flex;
    align-items: center;
    padding-left: 6px;
    border-bottom: 1px solid #e2e6ea;
  }

  .draw button {
    display: flex;
    align-items: center;
    gap: 5px;
    margin-right: 8px;
  }

  .draw .first { margin-left: 3px; }
  .draw .aa { font-size: 13px; color: #7289a6; margin-right: 10px; }
  .draw .tool { width: 25px; margin: 0; justify-content: center; }
  .draw .tool + .sep { margin-left: 2px; }

  .sep {
    width: 1px;
    height: 18px;
    margin-right: 3px;
    background: #dfe4e8;
  }

  /* indicator rows */
  .legend {
    height: 24px;
    display: flex;
    align-items: center;
    gap: 7px;
    padding: 0 5px 0 46px;
    font: 11px/14px "Liberation Sans", "Noto Sans CJK SC", sans-serif;
  }

  .ind {
    flex: none;
    display: flex;
    align-items: center;
    gap: 9px;
    color: #333e4b;
  }

  .ind.ma { width: 36px; }
  .ind.macd { width: 53px; }

  .val {
    flex: none;
    display: flex;
    align-items: center;
    gap: 5px;
    margin-right: -7px;
    white-space: nowrap;
  }

  .tri-down, .tri-up {
    border: 3px solid transparent;
  }

  .tri-down {
    border-top: 4px solid #1e9510;
    border-bottom: 0;
  }

  .tri-up {
    border-bottom: 4px solid #cc1c1c;
    border-top: 0;
  }

  .legend-end {
    margin-left: auto;
    display: flex;
    align-items: center;
    gap: 6px;
  }

  .adj {
    margin-right: 6px;
    color: #3b8de0;
    font-size: 12px;
  }

  /* charts */
  .pane {
    display: grid;
    grid-template-columns: 46px 1fr 60px;
    font: 11px/14px "Liberation Sans", sans-serif;
  }

  .price { flex: 1; min-height: 0; }
  .macd-pane { height: 161px; }

  .axis, .plot, .times, .nav { position: relative; }

  .axis span, .axis b {
    position: absolute;
    left: 3px;
    transform: translateY(-50%);
    font-weight: normal;
  }

  .axis.right span { left: 10px; }
  .axis.inner span { right: 10px; left: auto; }

  .axis b {
    left: 0;
    right: 0;
    padding-left: 4px;
    line-height: 18px;
    background: #cfe4fd;
    color: #1e9510;
  }

  .axis.right b { padding-left: 9px; }

  .fill {
    position: absolute;
    inset: 0;
    width: 100%;
    height: 100%;
  }

  .fill path, .fill polyline, .fill rect {
    fill: none;
    vector-effect: non-scaling-stroke;
  }

  .grid path { stroke: #eef2f4; shape-rendering: crispEdges; }
  .edge { stroke: #dfe5ea; shape-rendering: crispEdges; }
  .leader { stroke: #e3e7ea; }
  .candles { shape-rendering: crispEdges; }
  .rise path, .rise rect { stroke: #b8282b; }
  .fill .rise rect { fill: #fff; }
  .fall path, .fall rect { stroke: #1f9c06; }
  .fill .fall rect { fill: #1f9c06; }
  .ma1 { stroke: #8c8c8c; }
  .c-dif { stroke: #eb9440; stroke-width: 1.1; }
  .c-dea { stroke: #35a9d0; stroke-width: 1.1; }
  .c-900 { stroke: #d47fd2; }
  .last { stroke: #e8a35c; stroke-dasharray: 6 2; }
  .level { stroke: #000; stroke-width: 2.5; }
  .bar-up { stroke: #b8282b; shape-rendering: crispEdges; }
  .bar-down { stroke: #1f8c10; shape-rendering: crispEdges; }

  .mark, .remark {
    position: absolute;
    transform: translateY(-50%);
    white-space: nowrap;
  }

  .remark {
    margin: 0;
    color: #000;
    font: 300 24px/30px "Liberation Serif", "Noto Sans CJK SC", serif;
  }

  .sketch {
    position: absolute;
    z-index: 5;
    right: -90px;
    top: 324px;
    overflow: visible;
    fill: none;
    stroke: #000;
    stroke-width: 2;
  }

  .sketch ellipse { stroke-width: 4; }
  .sketch .head { fill: #000; stroke-width: 1; }

  .times {
    height: 18px;
    margin: 0 60px 0 46px;
    font: 11px/18px "Liberation Sans", sans-serif;
  }

  .times span { position: absolute; }

  .nav {
    height: 50px;
    margin: 0 60px 0 46px;
    font: 11px/14px "Liberation Sans", sans-serif;
  }

  .nav polygon { fill: #eff3f6; }

  .nav span {
    position: absolute;
    bottom: -1px;
    transform: translateX(-50%);
  }

  .range {
    position: absolute;
    right: 0;
    top: 1px;
    bottom: 1px;
    width: 136px;
    display: flex;
    align-items: center;
    justify-content: space-between;
    background: rgba(140, 155, 175, 0.12);
  }

  .more {
    position: absolute;
    left: 0;
    top: 17px;
    width: 21px;
    height: 15px;
    display: flex;
    align-items: center;
    justify-content: center;
    gap: 3px;
    border: 1px solid #c3cdd8;
    background: #fff;
  }

  .more i {
    width: 2px;
    height: 2px;
    background: #6d819b;
  }

  .studies {
    height: 38px;
    display: flex;
    align-items: center;
    gap: 17px;
    padding: 0 6px 0 5px;
    border-bottom: 1px solid #dfe4e8;
    font-size: 13px;
  }

  .studies .sep { margin: 0 -8px; height: 17px; }
  .studies .on { color: #f08c1e; }
  .studies .cn { font-size: 12px; }
  .session { margin-left: auto; }

  footer {
    position: relative;
    height: 14px;
    display: grid;
    grid-template-columns: 1fr 1fr;
    padding-left: 12px;
    overflow: hidden;
    color: #333e4b;
  }

  footer button { height: 26px; }

  .fold {
    position: absolute;
    left: -9px;
    top: 8px;
    width: 12px;
    height: 12px;
    border: 1px solid #7289a6;
  }

  /* quote panel */
  aside {
    position: relative;
    width: 338px;
    overflow: hidden;
  }

  .side { width: 351px; }

  .side-tabs {
    height: 15px;
    display: flex;
    align-items: flex-end;
    overflow: hidden;
    box-shadow: inset 0 -1px #e2e6ea;
  }

  .side-tabs button {
    flex: 1;
    height: 27px;
    border-bottom: 1px solid transparent;
  }

  .side-tabs .on {
    color: #f08c1e;
    border-color: #f08c1e;
  }

  .quote {
    height: 148px;
    padding: 11px 8px 0 8px;
    border-bottom: 2px solid #e3e8ec;
  }

  h1 {
    margin: 0;
    color: #28323d;
    font-size: 17px;
    line-height: 22px;
  }

  h1 span {
    margin-left: 7px;
    font-weight: normal;
  }

  .last-price {
    display: flex;
    align-items: center;
    height: 28px;
    gap: 6px;
    color: #1e9510;
    white-space: nowrap;
  }

  .last-price svg { fill: #1e9510; }

  .last-price strong {
    font: bold 28px/28px "Liberation Sans", sans-serif;
  }

  .last-price em {
    font: bold 12px/16px "Liberation Sans", sans-serif;
  }

  .last-price small {
    margin-left: 22px;
    color: #8292a6;
    font-size: 11px;
  }

  .badges {
    display: flex;
    align-items: center;
    gap: 8px;
    height: 26px;
    padding: 0 1px 0 2px;
  }

  .bell {
    width: 18px;
    height: 19px;
    display: flex;
    align-items: center;
    justify-content: center;
    margin-left: auto;
    border: 1px solid #b9c7d6;
  }

  .quick {
    height: 19px;
    padding: 0 3px;
    border: 1px solid #e8ecf0;
    color: #b3bcc7;
  }

  .stats {
    display: grid;
    grid-template-columns: repeat(3, 116px);
    margin-top: 6px;
    line-height: 18px;
    white-space: nowrap;
  }

  .stats b { font: bold 12px/18px "Liberation Sans", sans-serif; }

  .collapse {
    display: block;
    margin: 0 auto;
    height: 8px;
  }

  .up { color: #cb1f26; }
  .down { color: #22930f; }
  .flat { color: #5b6a7e; }

  h2 {
    margin: 0;
    height: 27px;
    padding-left: 6px;
    border-bottom: 1px solid #e2e6ea;
    color: #333e4b;
    font-size: 12px;
    font-weight: normal;
    line-height: 27px;
  }

  h2.second { height: 28px; line-height: 28px; }

  table {
    width: 100%;
    table-layout: fixed;
    border-collapse: separate;
    border-spacing: 0;
    color: #333e4b;
    font-size: 13px;
  }

  .w66 { width: 66px; }
  .w67 { width: 67px; }
  .w70 { width: 70px; }
  .w84 { width: 84px; }
  .w89 { width: 89px; }
  .w110 { width: 110px; }

  th, td {
    position: relative;
    box-sizing: border-box;
    height: 25px;
    padding: 0 8px;
    border-right: 1px solid #e8ecef;
    border-bottom: 1px solid #e8ecef;
    line-height: 20px;
    text-align: left;
    white-space: nowrap;
  }

  th {
    color: #5b6a7e;
    font-size: 12px;
    font-weight: normal;
  }

  .r { text-align: right; padding-left: 0; }
  td.num { font-size: 14px; }
  .major td.r { padding-right: 7px; }
  .last-col { padding-right: 11px; }
  .sort { padding-right: 7px; }
  .sort .chev { display: inline-block; stroke: #f08c1e; vertical-align: 2px; }
  .clip { overflow: hidden; }
  .name.link { color: #3b68a5; }
  .active td { background: #cfe4fd; }

  /* flashing quote cells */
  td.box { z-index: 0; }

  td.box::before {
    content: '';
    position: absolute;
    inset: 0;
    z-index: -1;
    border: 1px solid currentColor;
  }

  td.box.down::before { background: #e8fae6; }
  td.box.up::before { background: #fde6e8; }

  .watch {
    position: absolute;
    right: 3px;
    top: 5px;
    fill: none;
    stroke: #6f93ba;
    stroke-width: 2;
  }

  .watch .dot { fill: #6f93ba; stroke: none; }

  /* site mark */
  .brand {
    position: absolute;
    right: 13px;
    bottom: 10px;
    width: 144px;
    color: #a9a9a9;
  }

  .brand-top {
    display: flex;
    align-items: flex-start;
    gap: 4px;
  }

  .brand-name {
    display: flex;
    flex-direction: column;
  }

  .brand-name b {
    font: bold 31px/36px "Noto Sans CJK SC", sans-serif;
  }

  .brand-name span {
    font: bold 10px/12px "Liberation Sans", sans-serif;
  }

  .slogan {
    display: flex;
    justify-content: space-between;
    padding: 0 5px 0 4px;
    line-height: 16px;
  }
</style>
